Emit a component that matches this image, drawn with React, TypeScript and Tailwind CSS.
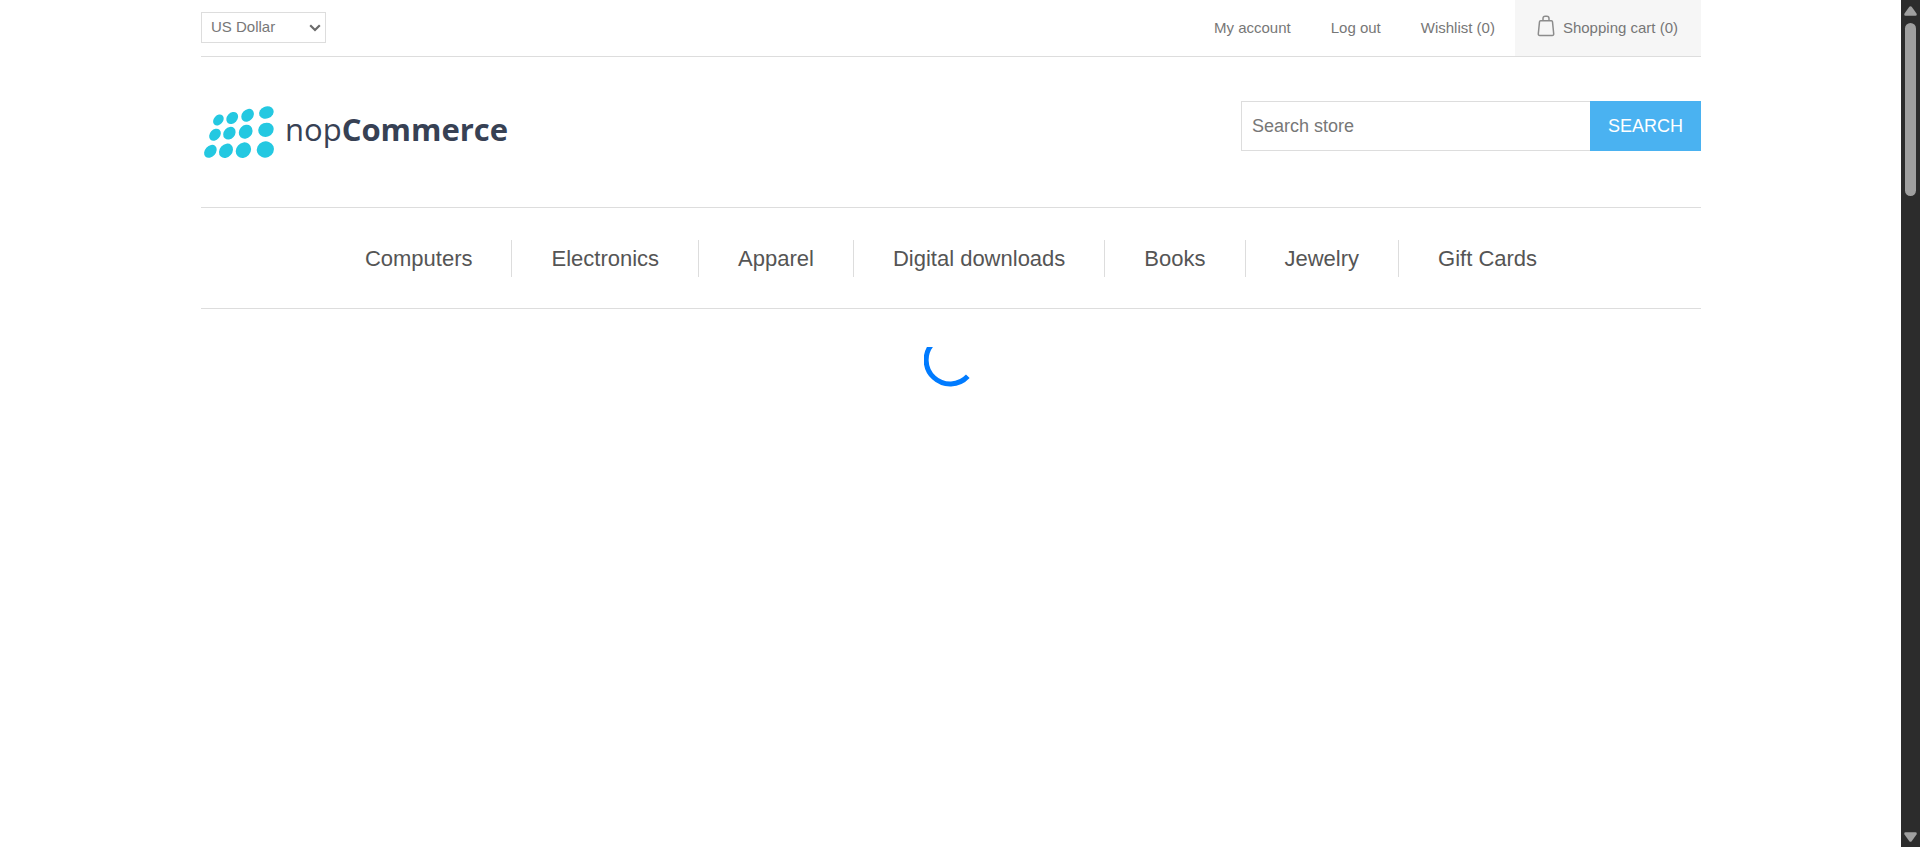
import React from "react";

const accountLinks = ["My account", "Log out", "Wishlist (0)"];

const categories = [
  "Computers",
  "Electronics",
  "Apparel",
  "Digital downloads",
  "Books",
  "Jewelry",
  "Gift Cards",
];

const dots = [
  { cx: 17.4, cy: 19, rx: 6.1, ry: 4.6 },
  { cx: 31.2, cy: 17, rx: 6.7, ry: 5.2 },
  { cx: 46.6, cy: 14.3, rx: 7.1, ry: 5.6 },
  { cx: 65.4, cy: 11.5, rx: 7.5, ry: 6 },
  { cx: 14, cy: 33.7, rx: 6.7, ry: 5.1 },
  { cx: 28.4, cy: 32.2, rx: 6.9, ry: 5.6 },
  { cx: 44.7, cy: 30.8, rx: 7.5, ry: 6.4 },
  { cx: 65, cy: 28.8, rx: 7.9, ry: 7 },
  { cx: 9.4, cy: 50.3, rx: 7.3, ry: 5.4 },
  { cx: 25, cy: 49.8, rx: 7.8, ry: 6.3 },
  { cx: 42.4, cy: 49.2, rx: 8.3, ry: 7.2 },
  { cx: 64.4, cy: 48.5, rx: 8.7, ry: 8.1 },
];

function Logo() {
  return (
    <a href="#" className="flex items-center gap-2" aria-label="nopCommerce">
      <svg className="shrink-0" width="76" height="60" viewBox="0 0 76 60" fill="#24c8e1" aria-hidden="true">
        {dots.map((d) => (
          <ellipse
            key={`${d.cx}-${d.cy}`}
            cx={d.cx}
            cy={d.cy}
            rx={d.rx}
            ry={d.ry}
            transform={`rotate(${d.cx > 60 ? -22 : -48} ${d.cx} ${d.cy})`}
          />
        ))}
      </svg>
      <span className="pb-1 font-['Open_Sans',sans-serif] text-[31px] leading-10 text-[#374154]">
        nop<b className="font-bold">Commerce</b>
      </span>
    </a>
  );
}

function TopBar() {
  return (
    <div className="flex h-[57px] items-center justify-between border-b border-[#ddd] text-[15px] text-[#777]">
      <div className="relative flex items-center pb-px">
        <select
          aria-label="Currency"
          defaultValue="US Dollar"
          className="h-[31px] w-[125px] appearance-none border border-[#ddd] bg-white pl-[9px] text-[#777]"
        >
          <option>US Dollar</option>
          <option>Euro</option>
        </select>
        <svg
          className="pointer-events-none absolute right-[5px]"
          width="12"
          height="8"
          viewBox="0 0 12 8"
          fill="none"
          stroke="#6b6b6b"
          strokeWidth="2.2"
          aria-hidden="true"
        >
          <path d="M1.2 1.2 6 6l4.8-4.8" />
        </svg>
      </div>
      <nav aria-label="Account" className="flex h-full items-center">
        {accountLinks.map((label) => (
          <a key={label} href="#" className="px-5">
            {label}
          </a>
        ))}
        <a href="#" className="flex h-full items-center gap-2 bg-[#f6f6f6] pr-[23px] pl-[22px]">
          <svg className="mb-1" width="18" height="22" viewBox="0 0 18 22" fill="none" stroke="#8c8c8c" strokeWidth="1.5" aria-hidden="true">
            <path d="M3.600 5.800h10.800q1 0 1.100 1l1.200 12q.1 1.700-1.500 1.700H2.800q-1.600 0-1.500-1.700l1.200-12q.1-1 1.100-1z" />
            <path d="M6 5.600V3.400C6 2 6.900 1.200 8.200 1.200h1.600c1.300 0 2.200.8 2.200 2.200v2.200" />
          </svg>
          Shopping cart (0)
        </a>
      </nav>
    </div>
  );
}

function SearchForm() {
  return (
    <form className="flex h-[50px]" onSubmit={(e) => e.preventDefault()}>
      <input
        type="text"
        aria-label="Search store"
        placeholder="Search store"
        className="w-[349px] border border-r-0 border-[#ddd] px-[10px] text-[18px] placeholder:text-[#777]"
      />
      <button type="submit" className="w-[111px] bg-[#4ab2f1] text-[18px] text-white">
        SEARCH
      </button>
    </form>
  );
}

function ScrollTrack() {
  return (
    <div className="flex w-[19px] shrink-0 flex-col items-center bg-[#2c2c2c] pt-[6px] pb-[5px]" aria-hidden="true">
      <svg width="13" height="10" viewBox="0 0 13 10" fill="#9f9f9f">
        <path d="M5.300.8q1.200-1.300 2.400 0L12.500 7.500q.8 2.300-1 2.300H1.500q-1.800 0-1-2.300z" />
      </svg>
      <div className="mt-[7px] h-[173px] w-[11px] rounded-full bg-[#9f9f9f]" />
      <svg className="mt-auto" width="13" height="10" viewBox="0 0 13 10" fill="#9f9f9f">
        <path d="M5.300 9.200q1.200 1.300 2.400 0L12.500 2.500q.8-2.300-1-2.300H1.500q-1.800 0-1 2.300z" />
      </svg>
    </div>
  );
}

export default function App() {
  return (
    <div className="flex min-h-screen bg-white font-['Liberation_Sans',Arial,sans-serif]">
      <div className="min-w-0 flex-1 pl-px">
        <div className="mx-auto max-w-[1500px]">
          <header>
            <TopBar />
            <div className="flex items-start justify-between border-b border-[#ddd] pt-11 pb-[46px]">
              <Logo />
              <SearchForm />
            </div>
          </header>
          <nav aria-label="Categories" className="flex h-[101px] items-center justify-center border-b border-[#ddd]">
            <ul className="flex divide-x divide-[#ddd]">
              {categories.map((name) => (
                <li key={name} className="px-[39px]">
                  <a href="#" className="block text-[22px] leading-[37px] text-[#555]">
                    {name}
                  </a>
                </li>
              ))}
            </ul>
          </nav>
          <main className="flex justify-center pt-[38px]">
            <svg width="54" height="42" viewBox="0 0 54 42" fill="none" role="img" aria-label="Loading">
              <path d="M8.600 -3.500A24 24 0 0 0 43.800 29.300" stroke="#007bff" strokeWidth="5" />
            </svg>
          </main>
        </div>
      </div>
      <ScrollTrack />
    </div>
  );
}
